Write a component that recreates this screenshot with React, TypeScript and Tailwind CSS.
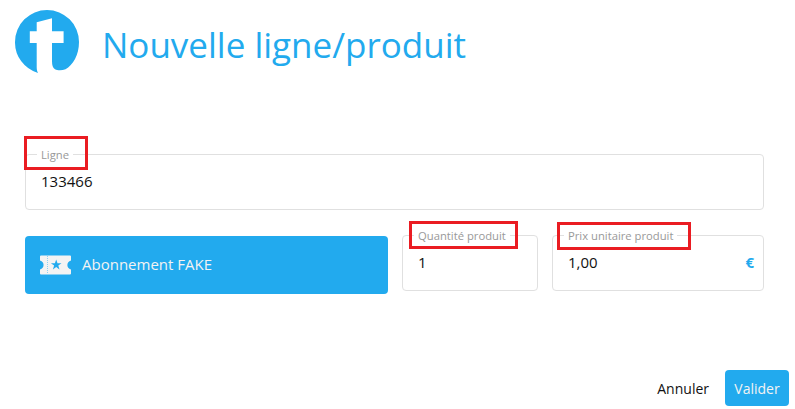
import React from 'react';

interface FieldProps {
    label: string;
    value: string;
    className: string;
    highlight: string;
    suffix?: string;
}

function Logo() {
    return (
        <svg className="ml-[15px] mt-[10px] shrink-0" width="64" height="64" viewBox="0 0 64 64">
            <path
                fill="#22aaee"
                d="M23 63A32 32 0 0 1 0 32A32 32 0 0 1 64 32C64 45 58 55 50.5 59.3C47 60.7 42.5 60.7 40 59.2C37.8 57.7 37 55.5 37 51V33H48.6V21.3H37V8.3L21.7 12.3V21.3H14.8V33H21.7V57C21.7 60 22.2 61.5 23 63Z"
            />
        </svg>
    );
}

function TicketIcon() {
    return (
        <svg className="shrink-0" width="31" height="20" viewBox="0 0 31 20">
            <path
                fill="#f3f3f3"
                d="M1 0.4H30Q31 0.4 31 1.4V5.4C26.2 6.5 26.2 13.3 31 14.4V18.4Q31 19.4 30 19.4H1Q0 19.4 0 18.4V14.4C4.8 13.3 4.8 6.5 0 5.4V1.4Q0 0.4 1 0.4Z"
            />
            <path d="M7.5 1V19" stroke="#8fd0f3" strokeWidth="1" strokeDasharray="1 1" />
            <path
                fill="#22aaee"
                d="M16.2 4.4L17.5 8.2H21.5L18.3 10.6L19.5 14.4L16.2 12.1L12.9 14.4L14.1 10.6L10.9 8.2H14.9Z"
            />
        </svg>
    );
}

function Field({ label, value, className, highlight, suffix }: FieldProps) {
    return (
        <div className={`relative flex h-14 items-start justify-between rounded border border-[#e0e0e0] pl-[15px] pr-[9px] pt-[15px] ${className}`}>
            <label className="absolute -top-[8px] left-[11px] bg-white px-1 text-[11.25px] leading-[15px] text-[#999999]">
                {label}
            </label>
            <span className="text-[15px] leading-[22px] text-[#111111]">{value}</span>
            {suffix && <span className="text-[15px] font-bold leading-[22px] text-[#22aaee]">{suffix}</span>}
            <div className={`absolute border-[3px] border-[#ea1c22] ${highlight}`} />
        </div>
    );
}

export default function App() {
    return (
        <div className="flex h-[409px] w-[795px] flex-col overflow-hidden bg-white font-['Open_Sans',sans-serif]">
            <header className="flex h-[154px] items-start">
                <Logo />
                <h1 className="ml-[23px] mt-[20px] text-[35px] leading-[50px] text-[#22aaee]">Nouvelle ligne/produit</h1>
            </header>

            <main className="ml-[25px] w-[739px]">
                <Field
                    label="Ligne"
                    value="133466"
                    className="w-full"
                    highlight="-left-[2px] -top-[19px] h-[34px] w-[64px]"
                />
                <div className="mt-[25px] flex items-start gap-[14px]">
                    <button className="mt-px flex h-[58px] w-[363px] items-center gap-[11px] rounded bg-[#22aaee] pl-[15px] text-[15px] text-[#f3f3f3]">
                        <TicketIcon />
                        <span className="-mt-[2px]">Abonnement FAKE</span>
                    </button>
                    <Field
                        label="Quantité produit"
                        value="1"
                        className="w-[136px]"
                        highlight="left-[6px] -top-[15px] h-[28px] w-[109px]"
                    />
                    <Field
                        label="Prix unitaire produit"
                        value="1,00"
                        className="w-[212px]"
                        highlight="left-[4px] -top-[14px] h-[28px] w-[134px]"
                        suffix="€"
                    />
                </div>
            </main>

            <footer className="mt-[76px] flex items-center justify-end gap-4 pr-[6px] text-[14px]">
                <button className="text-[#111111]">Annuler</button>
                <button className="h-9 w-16 rounded bg-[#22aaee] text-[#f3f3f3]">Valider</button>
            </footer>
        </div>
    );
}
